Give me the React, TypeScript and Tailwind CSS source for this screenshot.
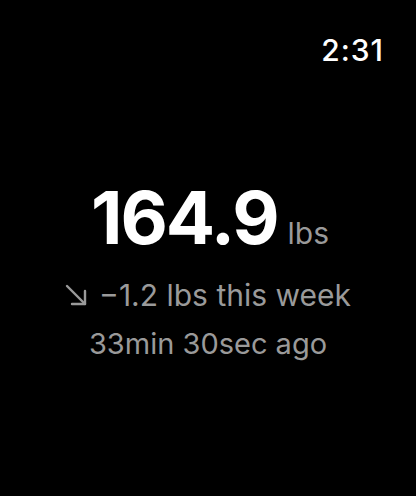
import React from "react";

export default function App() {
  return (
    <div className="w-[416px] h-[496px] bg-black text-white flex flex-col" style={{ fontFamily: "Inter, 'Noto Sans', sans-serif" }}>
      <div className="flex justify-end pr-[32px] pt-[33px]">
        <span className="text-[30px] leading-[34px] font-medium tracking-[1px]">2:31</span>
      </div>
      <div className="flex flex-col items-center mt-[111px]">
        <div className="flex items-baseline gap-[10px] pl-[4px]">
          <span className="text-[73px] leading-[80px] font-bold tracking-[-2px]">164.9</span>
          <span className="text-[30px] leading-[34px] text-[#9a9a9a]">lbs</span>
        </div>
        <div className="flex items-center gap-[12px] mt-[19px] text-[#9a9a9a] text-[30px] leading-[36px]">
          <svg width="22" height="22" viewBox="0 0 22 22" fill="none" stroke="#9a9a9a" strokeWidth="2.4" strokeLinecap="round" strokeLinejoin="round">
            <path d="M2 2 L20 20" />
            <path d="M20 7 L20 20 L7 20" />
          </svg>
          <span>−1.2 lbs this week</span>
        </div>
        <div className="mt-[13px] text-[#9a9a9a] text-[29px] leading-[36px]">33min 30sec ago</div>
      </div>
    </div>
  );
}
